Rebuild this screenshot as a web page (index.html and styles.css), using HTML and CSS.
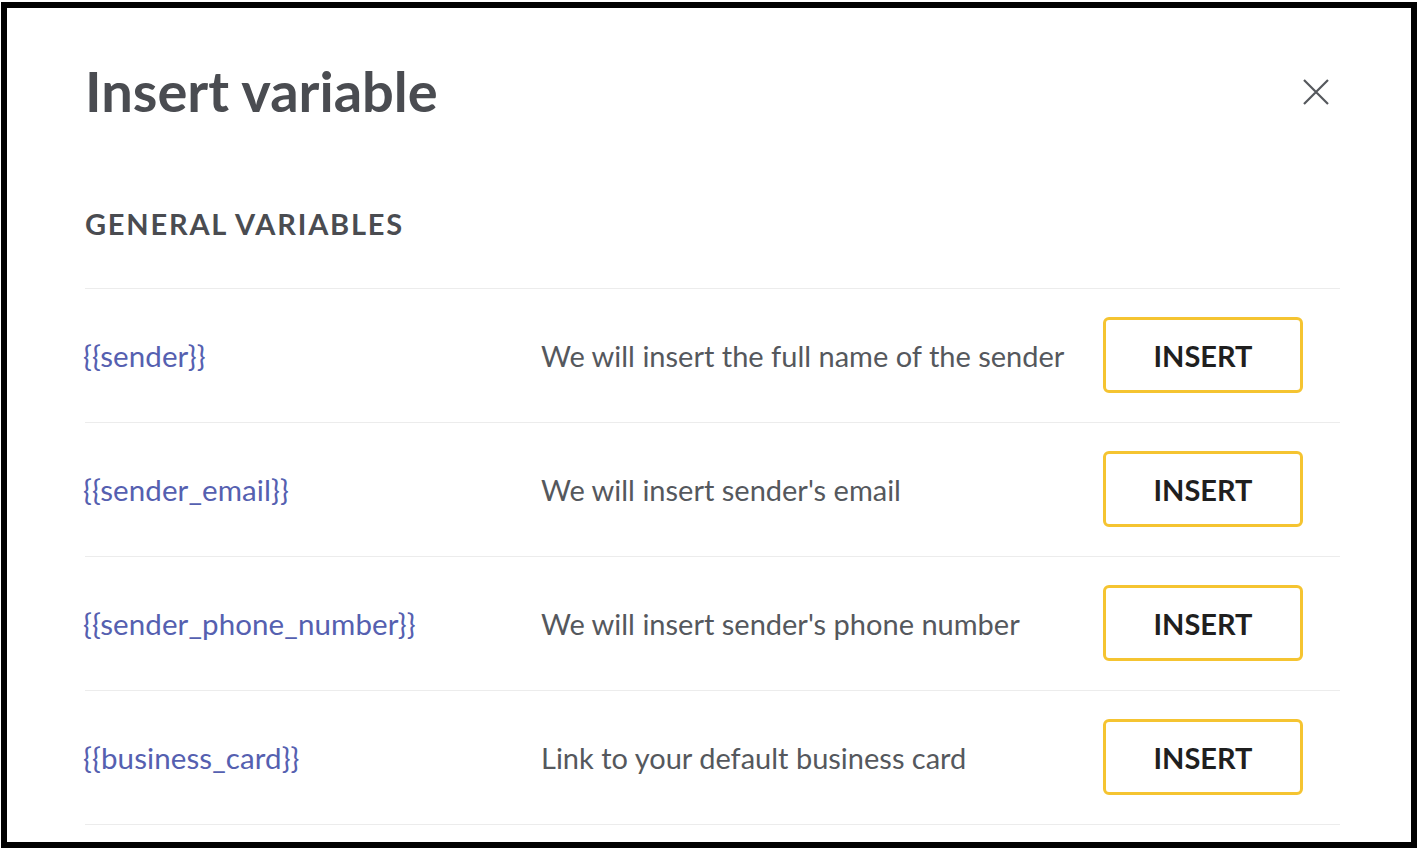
FILE: index.html
```html
<!DOCTYPE html>
<html lang="en">
<head>
    <meta charset="UTF-8">
    <title>Insert variable</title>
    <link rel="stylesheet" href="styles.css">
</head>
<body>
    <div class="modal">
        <div class="modal-header">
            <h1>Insert variable</h1>
            <button class="close" aria-label="Close">
                <svg width="26" height="26" viewBox="0 0 26 26"><path d="M1 1L25 25M25 1L1 25" stroke="#55585d" stroke-width="2.2" fill="none"/></svg>
            </button>
        </div>

        <h2>GENERAL VARIABLES</h2>

        <ul class="vars">
            <li>
                <span class="var">{{sender}}</span>
                <span class="desc">We will insert the full name of the sender</span>
                <button class="insert">INSERT</button>
            </li>
            <li>
                <span class="var">{{sender_email}}</span>
                <span class="desc">We will insert sender's email</span>
                <button class="insert">INSERT</button>
            </li>
            <li>
                <span class="var">{{sender_phone_number}}</span>
                <span class="desc">We will insert sender's phone number</span>
                <button class="insert">INSERT</button>
            </li>
            <li>
                <span class="var">{{business_card}}</span>
                <span class="desc">Link to your default business card</span>
                <button class="insert">INSERT</button>
            </li>
        </ul>
    </div>
</body>
</html>
```

FILE: styles.css
```css
html, body { margin: 0; padding: 0; background: #fff; }
body { font-family: Lato, "Open Sans", sans-serif; padding: 2px 0 0 1px; }
.modal { width: 1255px; height: 834px; border: 6px solid #000; background: #fff; padding: 0 71px 0 78px; overflow: hidden; }
.modal-header { display: flex; justify-content: space-between; align-items: center; padding-top: 49px; }
h1 { margin: 0; font-size: 56px; line-height: 1.2; font-weight: 700; color: #4a4c51; }
.close { background: none; border: none; padding: 0; margin-right: 11px; margin-top: 2px; cursor: pointer; display: flex; }
h2 { margin: 83px 0 46px; font-size: 29px; line-height: 1.2; font-weight: 700; color: #4a4c51; letter-spacing: 1.8px; }
.vars { list-style: none; margin: 0; padding: 0; border-bottom: 1px solid #ececec; }
.vars li { display: grid; grid-template-columns: 456px 1fr 200px; align-items: center; height: 133px; border-top: 1px solid #ececec; padding-right: 37px; }
.var { font-size: 29.5px; color: #5560b0; margin-left: -2px; letter-spacing: 0.1px; }
.desc { font-size: 29px; color: #55585d; }
.insert { width: 200px; height: 76px; border: 3px solid #f5c431; border-radius: 6px; background: #fff; font-family: Lato, sans-serif; font-size: 29px; font-weight: 700; color: #1f1f1f; cursor: pointer; }
```
